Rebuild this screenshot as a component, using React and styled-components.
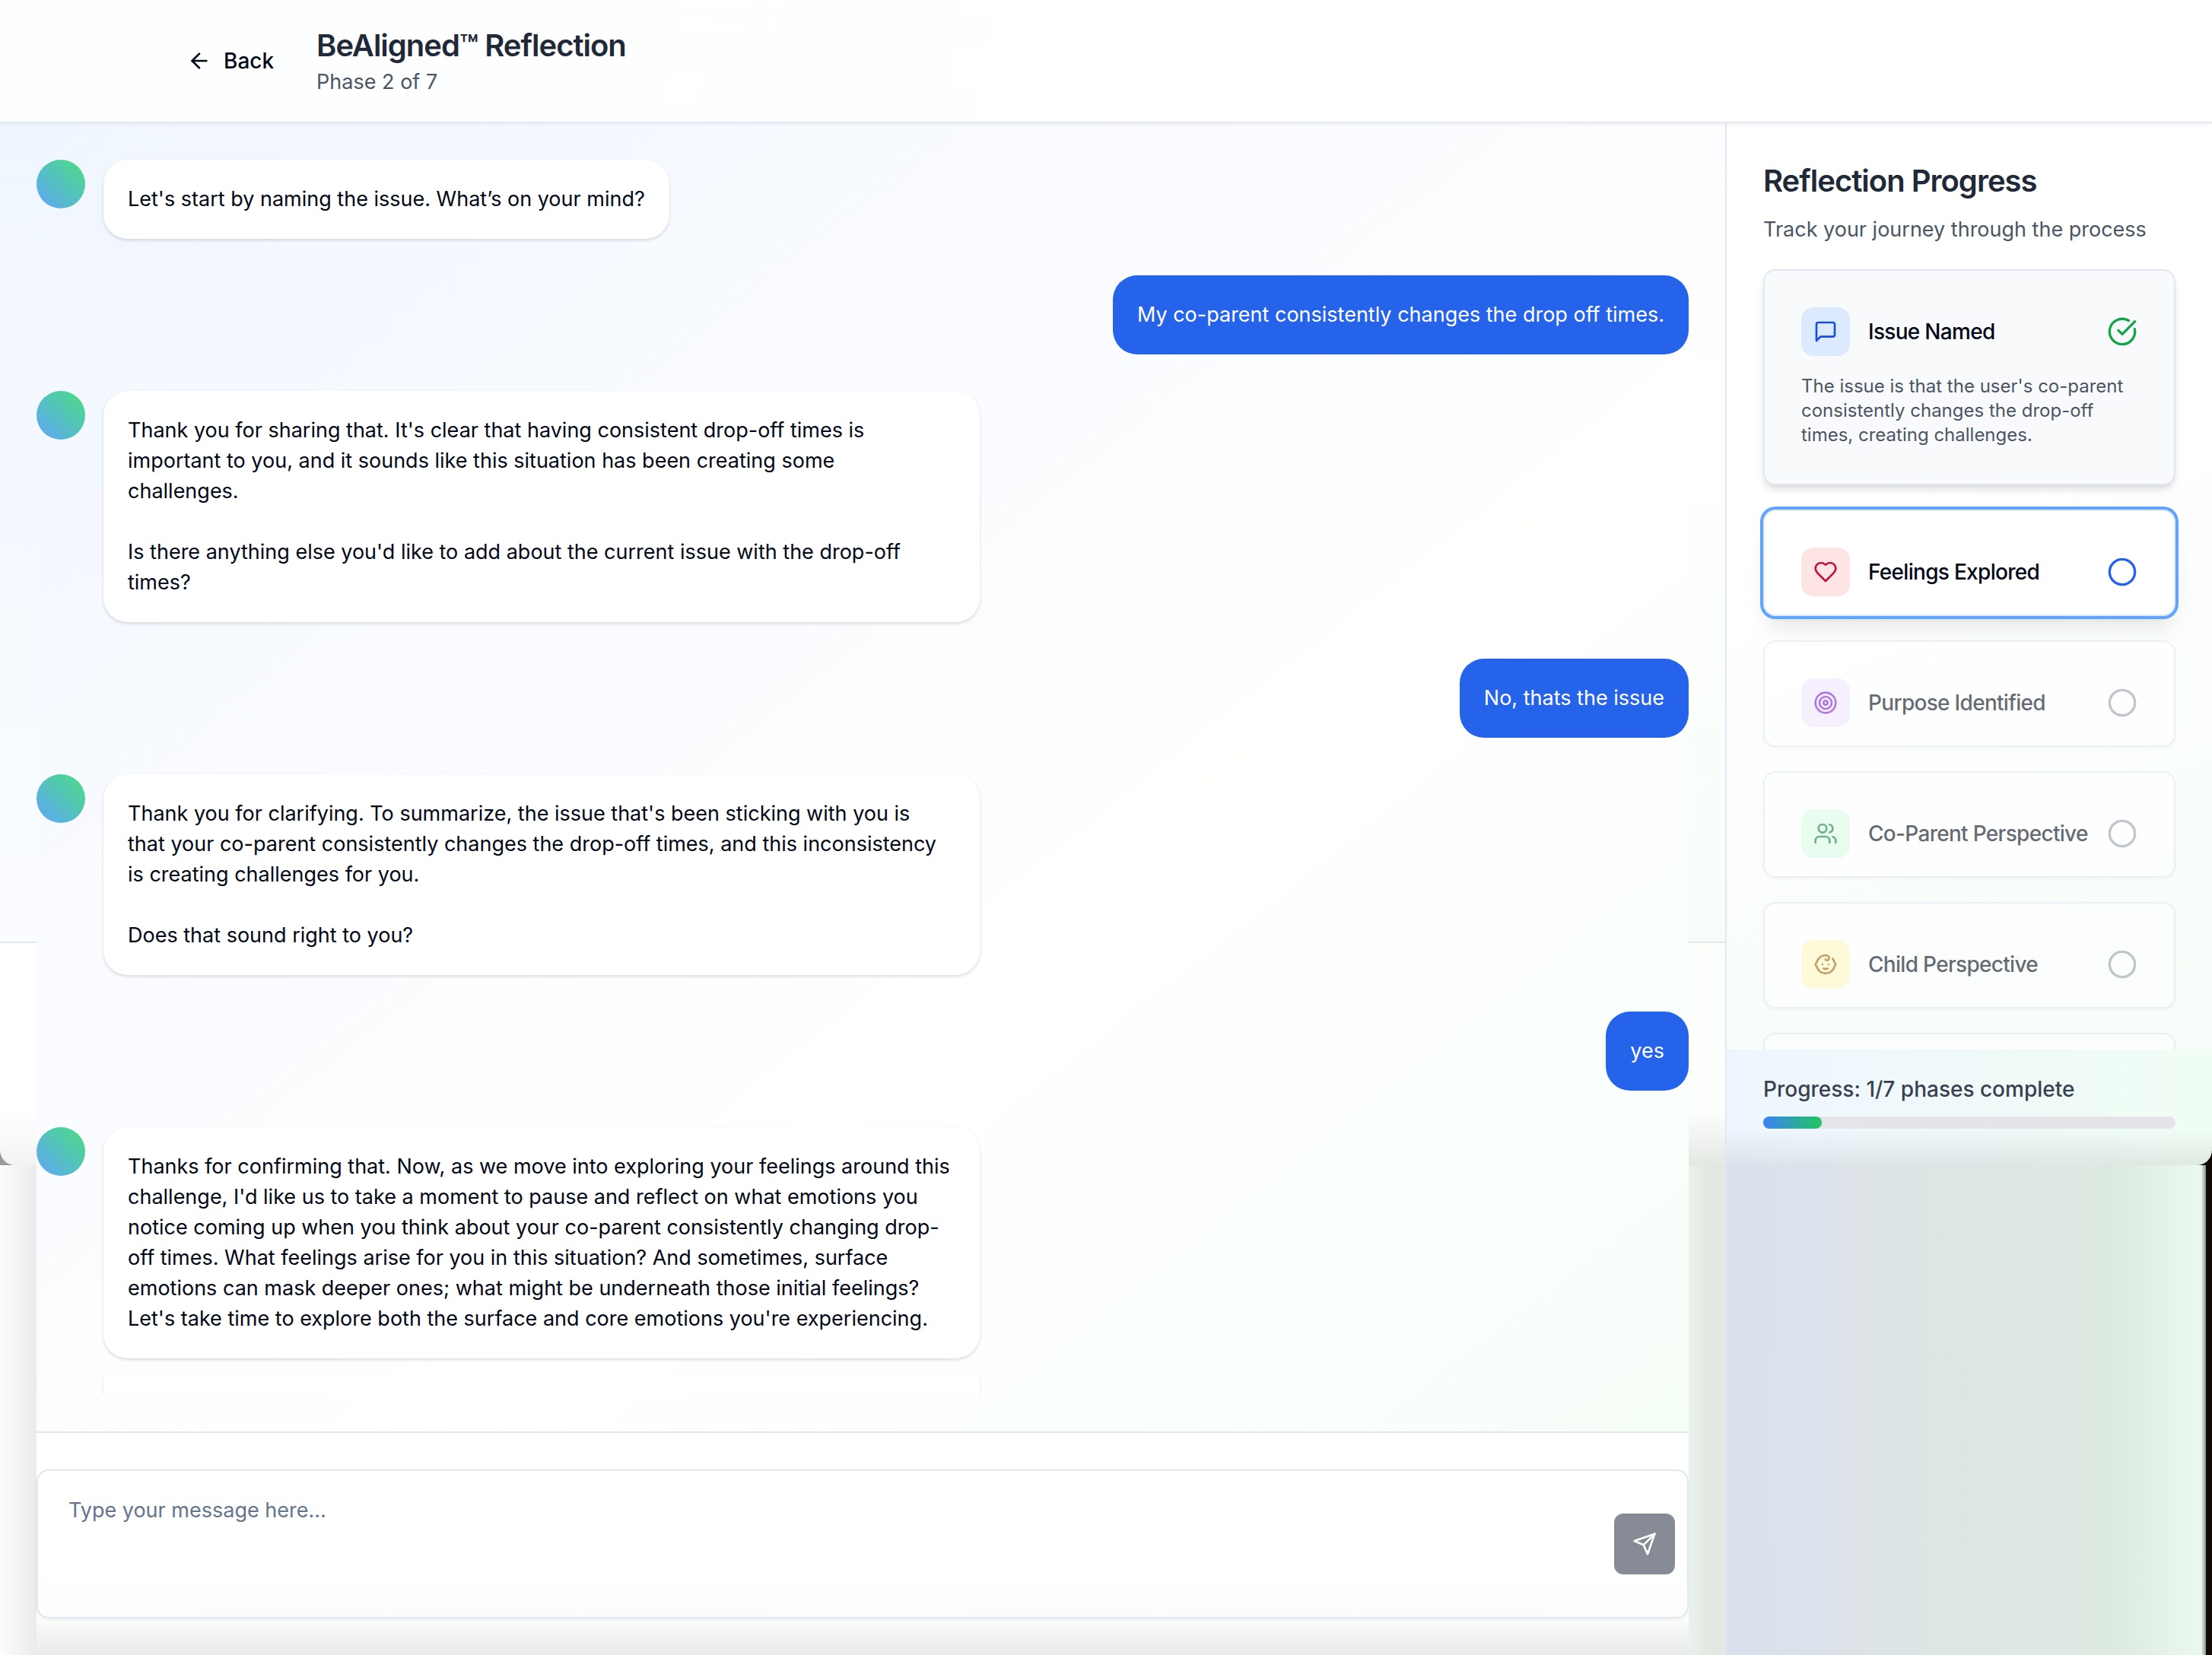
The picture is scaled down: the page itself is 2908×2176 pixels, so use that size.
import React from "react";
import styled, { createGlobalStyle, css } from "styled-components";
import { ArrowLeft, Circle, Target, Users } from "lucide-react";

const GlobalStyle = createGlobalStyle`
  *, *::before, *::after { box-sizing: border-box; }
  body {
    margin: 0;
    font-family: Inter, "Liberation Sans", sans-serif;
    font-size: 27px;
    line-height: 40px;
    color: #020817;
    background: #ffffff;
  }
  h1, h2, h3, p { margin: 0; }
  button, textarea { font: inherit; }
`;

const Page = styled.div`
  min-height: 100vh;
  display: flex;
  flex-direction: column;
`;

const Header = styled.header`
  border-bottom: 2px solid #e2e8f0;
  background: linear-gradient(100deg, #fdfeff, #ffffff);
  box-shadow: 0 2px 4px rgba(15, 23, 42, 0.05);
  z-index: 1;
`;

const HeaderInner = styled.div`
  max-width: 2560px;
  margin: 0 auto;
  padding: 32px 48px;
  display: flex;
  align-items: center;
  gap: 32px;
`;

const BackButton = styled.button`
  display: flex;
  align-items: center;
  gap: 16px;
  padding: 16px 24px;
  border: 0;
  border-radius: 12px;
  background: none;
  color: inherit;
  font-size: 28px;
  font-weight: 500;
`;

const Heading = styled.h1`
  font-size: 40px;
  line-height: 56px;
  font-weight: 600;
  letter-spacing: -0.025em;
  color: #1f2937;
`;

const Muted = styled.p`
  color: #4b5563;
`;

const Body = styled.div`
  flex: 1;
  display: flex;
`;

const Chat = styled.main`
  flex: 1;
  min-width: 0;
  display: grid;
  grid-template-columns: 48px minmax(0, 1fr) 48px;
`;

const Gutter = styled.div`
  display: flex;
  flex-direction: column;
`;

const GutterTop = styled.div`
  flex: 0 0 1078px;
  border-bottom: 2px solid #e2e8f0;
  background: ${(p) => p.$tint};
`;

const GutterCorner = styled.div`
  background: #9b9b9b;
`;

const GutterEdge = styled.div`
  height: 292px;
  border-bottom-left-radius: ${(p) => (p.$rounded ? "20px" : "0")};
  background: ${(p) => p.$tint};
`;

const GutterTrail = styled.div`
  flex: 1;
  background: ${(p) => p.$tint};
`;

const Panel = styled.div`
  display: flex;
  flex-direction: column;
`;

const Thread = styled.div`
  padding-bottom: 48px;
  border-bottom: 2px solid #e2e8f0;
  background: linear-gradient(
    to bottom right,
    #f0f6ff,
    #f9fbff 32%,
    #fdfdff 50%,
    #fffffe 62%,
    #fbfffc 80%,
    #f6fef8
  );
`;

const Messages = styled.div`
  display: flex;
  flex-direction: column;
  gap: 48px;
  padding: 48px 0 24px;
`;

const Row = styled.div`
  display: flex;
  gap: 24px;
  justify-content: ${(p) => (p.$mine ? "flex-end" : "flex-start")};
`;

const Avatar = styled.div`
  flex: none;
  width: 64px;
  height: 64px;
  border-radius: 50%;
  background: linear-gradient(to top right, #60a5fa, #4ade80);
`;

const Bubble = styled.p`
  width: ${(p) => (p.$long ? "1152px" : "auto")};
  padding: 32px;
  border-radius: 32px;
  white-space: pre-line;
  ${(p) =>
    p.$mine
      ? css`
          background: #2563eb;
          color: #ffffff;
        `
      : css`
          background: #ffffff;
          box-shadow: 0 2px 4px rgba(0, 0, 0, 0.14);
        `}
`;

const NextBubble = styled.div`
  height: 24px;
  margin-left: 88px;
  width: 1152px;
  background: #ffffff;
  box-shadow: -2px 0 2px -1px rgba(0, 0, 0, 0.08), 2px 0 2px -1px rgba(0, 0, 0, 0.08);
`;

const Composer = styled.form`
  flex: 1;
  padding: 48px 0;
  background: linear-gradient(to bottom, #fefffe 236px, #e9ebe9 292px);
`;

const Field = styled.div`
  display: flex;
  align-items: center;
  height: 196px;
  padding-right: 16px;
  border: 2px solid #e2e8f0;
  border-radius: 16px;
  background: linear-gradient(to bottom, #ffffff 70%, #fcfcfc);
  box-shadow: 0 2px 4px rgba(15, 23, 42, 0.05);
`;

const Input = styled.textarea`
  flex: 1;
  align-self: stretch;
  padding: 32px 40px;
  border: 0;
  outline: 0;
  resize: none;
  background: none;
  color: inherit;
  &::placeholder { color: #64748b; opacity: 1; }
`;

const SendButton = styled.button`
  display: grid;
  place-items: center;
  width: 80px;
  height: 80px;
  padding: 0;
  border: 0;
  border-radius: 12px;
  background: #868b95;
  color: #ffffff;
`;

const Aside = styled.aside`
  flex: 0 0 640px;
  display: flex;
  flex-direction: column;
  border-left: 2px solid #e2e8f0;
`;

const Progress = styled.section`
  flex: 0 0 1218px;
  overflow: hidden;
  padding: 48px;
  display: flex;
  flex-direction: column;
  background: linear-gradient(160deg, #ffffff 35%, #f7fdf9);
`;

const Subtitle = styled(Muted)`
  margin: 16px 0 32px;
`;

const Phases = styled.div`
  display: flex;
  flex-direction: column;
  gap: 32px;
`;

const looks = {
  done: css`
    background: #f9fafc;
    box-shadow: 0 8px 12px -2px rgba(0, 0, 0, 0.1), 0 4px 8px -4px rgba(0, 0, 0, 0.1);
  `,
  current: css`
    background: #ffffff;
    box-shadow: 0 0 0 4px #60a5fa, 0 20px 30px -6px rgba(0, 0, 0, 0.1),
      0 8px 12px -8px rgba(0, 0, 0, 0.1);
  `,
  next: css`
    background: #ffffff;
    box-shadow: 0 2px 4px rgba(0, 0, 0, 0.05);
    opacity: 0.6;
  `,
};

const Card = styled.article`
  padding: 48px 48px ${(p) => (p.$look === "done" ? "48px" : "24px")};
  border: 2px solid #e2e8f0;
  border-radius: 16px;
  ${(p) => looks[p.$look]}
`;

const CardHead = styled.div`
  display: flex;
  align-items: center;
  gap: 24px;
`;

const Badge = styled.span`
  flex: none;
  display: grid;
  place-items: center;
  width: 64px;
  height: 64px;
  border-radius: 16px;
  background: ${(p) => p.$bg};
  color: ${(p) => p.$ink};
`;

const CardTitle = styled.h3`
  flex: 1;
  white-space: nowrap;
  font-size: 28px;
  line-height: 40px;
  font-weight: 500;
  letter-spacing: -0.025em;
`;

const Status = styled.span`
  display: flex;
  color: ${(p) => p.$ink};
`;

const Summary = styled.p`
  margin-top: 24px;
  font-size: 24px;
  line-height: 32px;
  color: #4b5563;
`;

const DarkCorner = styled.div`
  background: #120a04;
`;

const Footer = styled.footer`
  padding: 32px 48px 48px;
  display: flex;
  flex-direction: column;
  gap: 16px;
  border-bottom-right-radius: 20px;
  background: linear-gradient(to bottom, rgba(60, 60, 60, 0) 104px, rgba(60, 60, 60, 0.1) 152px),
    linear-gradient(to right, #eff6ff, #f0fdf4);
`;

const FooterLabel = styled.p`
  font-size: 28px;
  font-weight: 500;
  color: #374151;
`;

const Track = styled.div`
  height: 16px;
  border-radius: 8px;
  background: #e4e4e9;
`;

const Fill = styled.div`
  height: 100%;
  border-radius: 8px;
  background: linear-gradient(to right, #3b82f6, #22c55e);
`;

const Trail = styled.div`
  flex: 1;
  border-right: 8px solid #120a04;
  background: linear-gradient(
    to right,
    #dae1ec,
    #dce2eb 20%,
    #dde2e7 27%,
    #dce4e5 35%,
    #dee7e4 62%,
    #dce9e0 80%,
    #e3f1e7 90%,
    #ebf8f0 99%,
    #8a918d
  );
`;

function Glyph({ size = 32, children }) {
  return (
    <svg width={size} height={size} viewBox="0 0 24 24" fill="none" stroke="currentColor"
      strokeWidth="2" strokeLinecap="round" strokeLinejoin="round" aria-hidden="true">
      {children}
    </svg>
  );
}

const MessageIcon = () => (
  <Glyph><path d="M21 15a2 2 0 0 1-2 2H7l-4 4V5a2 2 0 0 1 2-2h14a2 2 0 0 1 2 2z" /></Glyph>
);
const HeartIcon = () => (
  <Glyph><path d="M19 14c1.49-1.46 3-3.21 3-5.5A5.5 5.5 0 0 0 16.5 3c-1.76 0-3 .5-4.5 2-1.5-1.5-2.74-2-4.5-2A5.5 5.5 0 0 0 2 8.5c0 2.3 1.5 4.05 3 5.5l7 7Z" /></Glyph>
);
const BabyIcon = () => (
  <Glyph>
    <path d="M9 12h.01" /><path d="M15 12h.01" />
    <path d="M10 16c.5.3 1.2.5 2 .5s1.5-.2 2-.5" />
    <path d="M19 6.3a9 9 0 0 1 1.8 3.9 2 2 0 0 1 0 3.6 9 9 0 0 1-17.6 0 2 2 0 0 1 0-3.6A9 9 0 0 1 12 3c2 0 3.5 1.1 3.5 2.5s-.9 2.5-2 2.5c-.8 0-1.5-.4-1.5-1" />
  </Glyph>
);
const SendIcon = () => (
  <Glyph><path d="m22 2-7 20-4-9-9-4Z" /><path d="M22 2 11 13" /></Glyph>
);
const CheckIcon = () => (
  <Glyph size={40}><path d="M21.801 10A10 10 0 1 1 17 3.335" /><path d="m9 11 3 3L22 4" /></Glyph>
);

const messages = [
  { text: "Let's start by naming the issue. What’s on your mind?" },
  { mine: true, text: "My co-parent consistently changes the drop off times." },
  {
    long: true,
    text: `Thank you for sharing that. It's clear that having consistent drop-off times is
important to you, and it sounds like this situation has been creating some
challenges.

Is there anything else you'd like to add about the current issue with the drop-off
times?`,
  },
  { mine: true, text: "No, thats the issue" },
  {
    long: true,
    text: `Thank you for clarifying. To summarize, the issue that's been sticking with you is
that your co-parent consistently changes the drop-off times, and this inconsistency
is creating challenges for you.

Does that sound right to you?`,
  },
  { mine: true, text: "yes" },
  {
    long: true,
    text: `Thanks for confirming that. Now, as we move into exploring your feelings around this
challenge, I'd like us to take a moment to pause and reflect on what emotions you
notice coming up when you think about your co-parent consistently changing drop-
off times. What feelings arise for you in this situation? And sometimes, surface
emotions can mask deeper ones; what might be underneath those initial feelings?
Let's take time to explore both the surface and core emotions you're experiencing.`,
  },
];

const phases = [
  {
    look: "done", title: "Issue Named", icon: <MessageIcon />, bg: "#dbeafe", ink: "#1d4ed8",
    summary: "The issue is that the user's co-parent consistently changes the drop-off times, creating challenges.",
  },
  { look: "current", title: "Feelings Explored", icon: <HeartIcon />, bg: "#ffe4e6", ink: "#be123c" },
  { look: "next", title: "Purpose Identified", icon: <Target size={32} />, bg: "#f3e8ff", ink: "#7e22ce" },
  { look: "next", title: "Co-Parent Perspective", icon: <Users size={32} />, bg: "#dcfce7", ink: "#15803d" },
  { look: "next", title: "Child Perspective", icon: <BabyIcon />, bg: "#fef9c3", ink: "#a16207" },
  { look: "next", title: "", bg: "transparent", ink: "transparent" },
];

const statusInk = { done: "#16a34a", current: "#2563eb", next: "#9ca3af" };

export default function App() {
  const complete = phases.filter((p) => p.look === "done").length;
  return (
    <Page>
      <GlobalStyle />
      <Header>
        <HeaderInner>
          <BackButton type="button"><ArrowLeft size={32} />Back</BackButton>
          <div>
            <Heading>BeAligned™ Reflection</Heading>
            <Muted>Phase 2 of 7</Muted>
          </div>
        </HeaderInner>
      </Header>
      <Body>
        <Chat>
          <Gutter>
            <GutterTop $tint="linear-gradient(to bottom, #f0f6ff, #fafcff)" />
            <GutterCorner>
              <GutterEdge $rounded $tint="linear-gradient(to bottom, #ffffff 75%, #f3f3f3)" />
            </GutterCorner>
            <GutterTrail $tint="linear-gradient(to right, #fcfcfc, #ebebeb)" />
          </Gutter>
          <Panel>
            <Thread>
              <Messages>
                {messages.map((m, i) => (
                  <Row key={i} $mine={m.mine}>
                    {!m.mine && <Avatar />}
                    <Bubble $mine={m.mine} $long={m.long}>{m.text}</Bubble>
                  </Row>
                ))}
              </Messages>
              <NextBubble />
            </Thread>
            <Composer>
              <Field>
                <Input aria-label="Message" placeholder="Type your message here..." />
                <SendButton type="button" aria-label="Send"><SendIcon /></SendButton>
              </Field>
            </Composer>
          </Panel>
          <Gutter>
            <GutterTop $tint="linear-gradient(to bottom, #fdfdff, #fffffe 40%, #f7fef9)" />
            <GutterEdge $tint="linear-gradient(to bottom, #fdfffd 75%, #e4e8e3)" />
            <GutterTrail $tint="linear-gradient(to right, #ebf1ec, #e4e8e3 50%)" />
          </Gutter>
        </Chat>
        <Aside>
          <Progress>
            <Heading as="h2">Reflection Progress</Heading>
            <Subtitle>Track your journey through the process</Subtitle>
            <Phases>
              {phases.map((p, i) => (
                <Card key={i} $look={p.look}>
                  <CardHead>
                    <Badge $bg={p.bg} $ink={p.ink}>{p.icon}</Badge>
                    <CardTitle>{p.title}</CardTitle>
                    <Status $ink={statusInk[p.look]}>
                      {p.look === "done" ? <CheckIcon /> : <Circle size={40} />}
                    </Status>
                  </CardHead>
                  {p.summary && <Summary>{p.summary}</Summary>}
                </Card>
              ))}
            </Phases>
          </Progress>
          <DarkCorner>
            <Footer>
              <FooterLabel>Progress: {complete}/7 phases complete</FooterLabel>
              <Track><Fill style={{ width: `${(complete / 7) * 100}%` }} /></Track>
            </Footer>
          </DarkCorner>
          <Trail />
        </Aside>
      </Body>
    </Page>
  );
}
